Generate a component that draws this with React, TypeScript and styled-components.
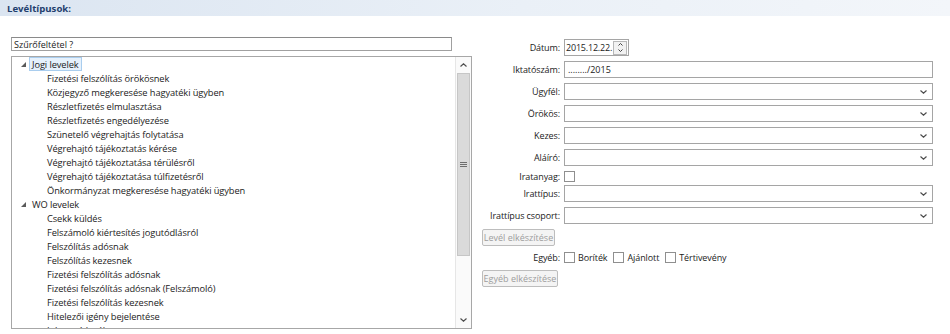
import styled, { createGlobalStyle } from "styled-components";

const GlobalStyle = createGlobalStyle`
  body {
    margin: 0;
    font-family: "Open Sans", "Noto Sans", sans-serif;
    font-size: 9px;
    color: #1b1b1b;
    background: #ffffff;
  }
  * {
    box-sizing: border-box;
  }
`;

const Header = styled.div`
  height: 16px;
  padding-left: 7px;
  display: flex;
  align-items: center;
  font-weight: 700;
  font-size: 9.6px;
  color: #1f3f6e;
  background: linear-gradient(to right, #dbe5f1, #eaf0f7 55%, #f3f6fa);
`;

const Content = styled.div`
  display: flex;
  gap: 9px;
  padding: 21px 0 0 11px;
`;

const LeftColumn = styled.div`
  width: 461px;
  display: flex;
  flex-direction: column;
  gap: 5px;
`;

const FilterInput = styled.div`
  width: 441px;
  height: 14px;
  border: 1px solid #a0a0a0;
  border-top-color: #8a8a8a;
  padding-left: 2px;
  display: flex;
  align-items: center;
  white-space: nowrap;
`;

const TreeBox = styled.div`
  height: 273px;
  border: 1px solid #a7a7a7;
  display: flex;
`;

const TreeList = styled.div`
  flex: 1;
  overflow: hidden;
  font-size: 9.3px;
  letter-spacing: -0.1px;
`;

const TreeRow = styled.div<{ $level: number }>`
  height: 14px;
  display: flex;
  align-items: center;
  padding-left: ${(p) => (p.$level === 0 ? 9 : 35)}px;
  white-space: nowrap;
`;

const Expander = styled.span`
  width: 8px;
  height: 14px;
  display: flex;
  align-items: center;
  margin-right: 1px;
`;

const NodeLabel = styled.span<{ $selected?: boolean }>`
  height: 14px;
  display: flex;
  align-items: center;
  padding: 0 2px;
  margin-left: -1px;
  border: 1px solid ${(p) => (p.$selected ? "#a9cdee" : "transparent")};
  background: ${(p) => (p.$selected ? "#e6f1fc" : "transparent")};
`;

const ScrollBar = styled.div`
  width: 16px;
  border-left: 1px solid #e6e6e6;
  background: #fafafa;
  display: flex;
  flex-direction: column;
`;

const ScrollButton = styled.div`
  height: 16px;
  display: flex;
  align-items: center;
  justify-content: center;
`;

const ScrollThumb = styled.div`
  height: 183px;
  margin: 0 1px;
  background: #dadada;
  border: 1px solid #c6c6c6;
  display: flex;
  align-items: center;
  justify-content: center;
`;

const ScrollTrack = styled.div`
  flex: 1;
`;

const RightColumn = styled.div`
  width: 452px;
  padding-top: 2px;
  display: flex;
  flex-direction: column;
  gap: 5px;
`;

const FormRow = styled.div<{ $height?: number; $shift?: number }>`
  display: grid;
  grid-template-columns: 79px 1fr;
  column-gap: 4px;
  align-items: center;
  height: ${(p) => p.$height ?? 17}px;
  margin-top: ${(p) => p.$shift ?? 0}px;
`;

const Label = styled.span`
  text-align: right;
  white-space: nowrap;
  letter-spacing: -0.1px;
`;

const TextBox = styled.div`
  height: 17px;
  border: 1px solid #a5a5a5;
  background: #fff;
  display: flex;
  align-items: center;
  padding-left: 3px;
  white-space: nowrap;
`;

const ComboBox = styled.div`
  height: 17px;
  border: 1px solid #a5a5a5;
  background: #fff;
  display: flex;
  align-items: center;
  justify-content: flex-end;
  padding-right: 5px;
`;

const DateBox = styled.div`
  width: 65px;
  height: 17px;
  border: 1px solid #a5a5a5;
  background: #fff;
  display: flex;
  align-items: center;
  justify-content: space-between;
  padding: 1px 1px 1px 1px;
  white-space: nowrap;
  letter-spacing: -0.2px;
`;

const Spinner = styled.div`
  width: 14px;
  height: 14px;
  border: 1px solid #b8b8b8;
  background: #f2f2f2;
  display: flex;
  flex-direction: column;
  flex: none;
`;

const SpinHalf = styled.div`
  flex: 1;
  display: flex;
  align-items: center;
  justify-content: center;
`;

const CheckBox = styled.span`
  width: 11px;
  height: 11px;
  border: 1px solid #8f8f8f;
  background: #fff;
  display: inline-block;
  flex: none;
`;

const CheckGroup = styled.div`
  display: flex;
  align-items: center;
  gap: 3px;
  margin-right: 6px;
  letter-spacing: -0.1px;
`;

const CheckLine = styled.div`
  display: flex;
  align-items: center;
`;

const Button = styled.div<{ $width: number; $shift?: number }>`
  width: ${(p) => p.$width}px;
  height: 17px;
  margin-left: 1px;
  margin-top: ${(p) => p.$shift ?? 0}px;
  border: 1px solid #bdbdbd;
  border-radius: 2px;
  background: #f4f4f4;
  color: #9d9d9d;
  display: flex;
  align-items: center;
  justify-content: center;
  white-space: nowrap;
`;

const Chevron = ({ up = false }: { up?: boolean }) => (
  <svg width="7" height="4" viewBox="0 0 7 4">
    <path
      d={up ? "M0.5 3.5 L3.5 0.8 L6.5 3.5" : "M0.5 0.5 L3.5 3.2 L6.5 0.5"}
      fill="none"
      stroke="#4d4d4d"
      strokeWidth="1.2"
    />
  </svg>
);

const TinyChevron = ({ up = false }: { up?: boolean }) => (
  <svg width="5" height="3" viewBox="0 0 5 3">
    <path d={up ? "M0.5 2.5 L2.5 0.5 L4.5 2.5" : "M0.5 0.5 L2.5 2.5 L4.5 0.5"} fill="none" stroke="#404040" strokeWidth="1" />
  </svg>
);

const Triangle = () => (
  <svg width="5" height="5" viewBox="0 0 5 5">
    <polygon points="5,0 5,5 0,5" fill="#5a5a5a" />
  </svg>
);

const Grip = () => (
  <svg width="7" height="7" viewBox="0 0 7 7">
    <path d="M0 1.5 H7 M0 3.5 H7 M0 5.5 H7" stroke="#6e6e6e" strokeWidth="1" />
  </svg>
);

type Node = { label: string; children: string[] };

const tree: Node[] = [
  {
    label: "Jogi levelek",
    children: [
      "Fizetési felszólítás örökösnek",
      "Közjegyző megkeresése hagyatéki ügyben",
      "Részletfizetés elmulasztása",
      "Részletfizetés engedélyezése",
      "Szünetelő végrehajtás folytatása",
      "Végrehajtó tájékoztatás kérése",
      "Végrehajtó tájékoztatása térülésről",
      "Végrehajtó tájékoztatása túlfizetésről",
      "Önkormányzat megkeresése hagyatéki ügyben",
    ],
  },
  {
    label: "WO levelek",
    children: [
      "Csekk küldés",
      "Felszámoló kiértesítés jogutódlásról",
      "Felszólítás adósnak",
      "Felszólítás kezesnek",
      "Fizetési felszólítás adósnak",
      "Fizetési felszólítás adósnak (Felszámoló)",
      "Fizetési felszólítás kezesnek",
      "Hitelezői igény bejelentése",
      "Inkasszó levél",
    ],
  },
];

const combos = ["Ügyfél:", "Örökös:", "Kezes:", "Aláíró:"];

export default function App() {
  return (
    <>
      <GlobalStyle />
      <Header>Levéltípusok:</Header>
      <Content>
        <LeftColumn>
          <FilterInput>Szűrőfeltétel ?</FilterInput>
          <TreeBox>
            <TreeList>
              {tree.map((node, i) => (
                <div key={node.label}>
                  <TreeRow $level={0}>
                    <Expander>
                      <Triangle />
                    </Expander>
                    <NodeLabel $selected={i === 0}>{node.label}</NodeLabel>
                  </TreeRow>
                  {node.children.map((child) => (
                    <TreeRow key={child} $level={1}>
                      {child}
                    </TreeRow>
                  ))}
                </div>
              ))}
            </TreeList>
            <ScrollBar>
              <ScrollButton>
                <Chevron up />
              </ScrollButton>
              <ScrollThumb>
                <Grip />
              </ScrollThumb>
              <ScrollTrack />
              <ScrollButton>
                <Chevron />
              </ScrollButton>
            </ScrollBar>
          </TreeBox>
        </LeftColumn>

        <RightColumn>
          <FormRow>
            <Label>Dátum:</Label>
            <DateBox>
              <span>2015.12.22.</span>
              <Spinner>
                <SpinHalf>
                  <TinyChevron up />
                </SpinHalf>
                <SpinHalf>
                  <TinyChevron />
                </SpinHalf>
              </Spinner>
            </DateBox>
          </FormRow>
          <FormRow>
            <Label>Iktatószám:</Label>
            <TextBox>......../2015</TextBox>
          </FormRow>
          {combos.map((label) => (
            <FormRow key={label}>
              <Label>{label}</Label>
              <ComboBox>
                <Chevron />
              </ComboBox>
            </FormRow>
          ))}
          <FormRow $height={11} $shift={-1}>
            <Label>Iratanyag:</Label>
            <CheckBox />
          </FormRow>
          <FormRow $shift={-1}>
            <Label>Irattípus:</Label>
            <ComboBox>
              <Chevron />
            </ComboBox>
          </FormRow>
          <FormRow>
            <Label>Irattípus csoport:</Label>
            <ComboBox>
              <Chevron />
            </ComboBox>
          </FormRow>
          <Button $width={73}>Levél elkészítése</Button>
          <FormRow $height={13}>
            <Label>Egyéb:</Label>
            <CheckLine>
              <CheckGroup>
                <CheckBox />
                <span>Boríték</span>
              </CheckGroup>
              <CheckGroup>
                <CheckBox />
                <span>Ajánlott</span>
              </CheckGroup>
              <CheckGroup>
                <CheckBox />
                <span>Tértivevény</span>
              </CheckGroup>
            </CheckLine>
          </FormRow>
          <Button $width={76} $shift={1}>
            Egyéb elkészítése
          </Button>
        </RightColumn>
      </Content>
    </>
  );
}
